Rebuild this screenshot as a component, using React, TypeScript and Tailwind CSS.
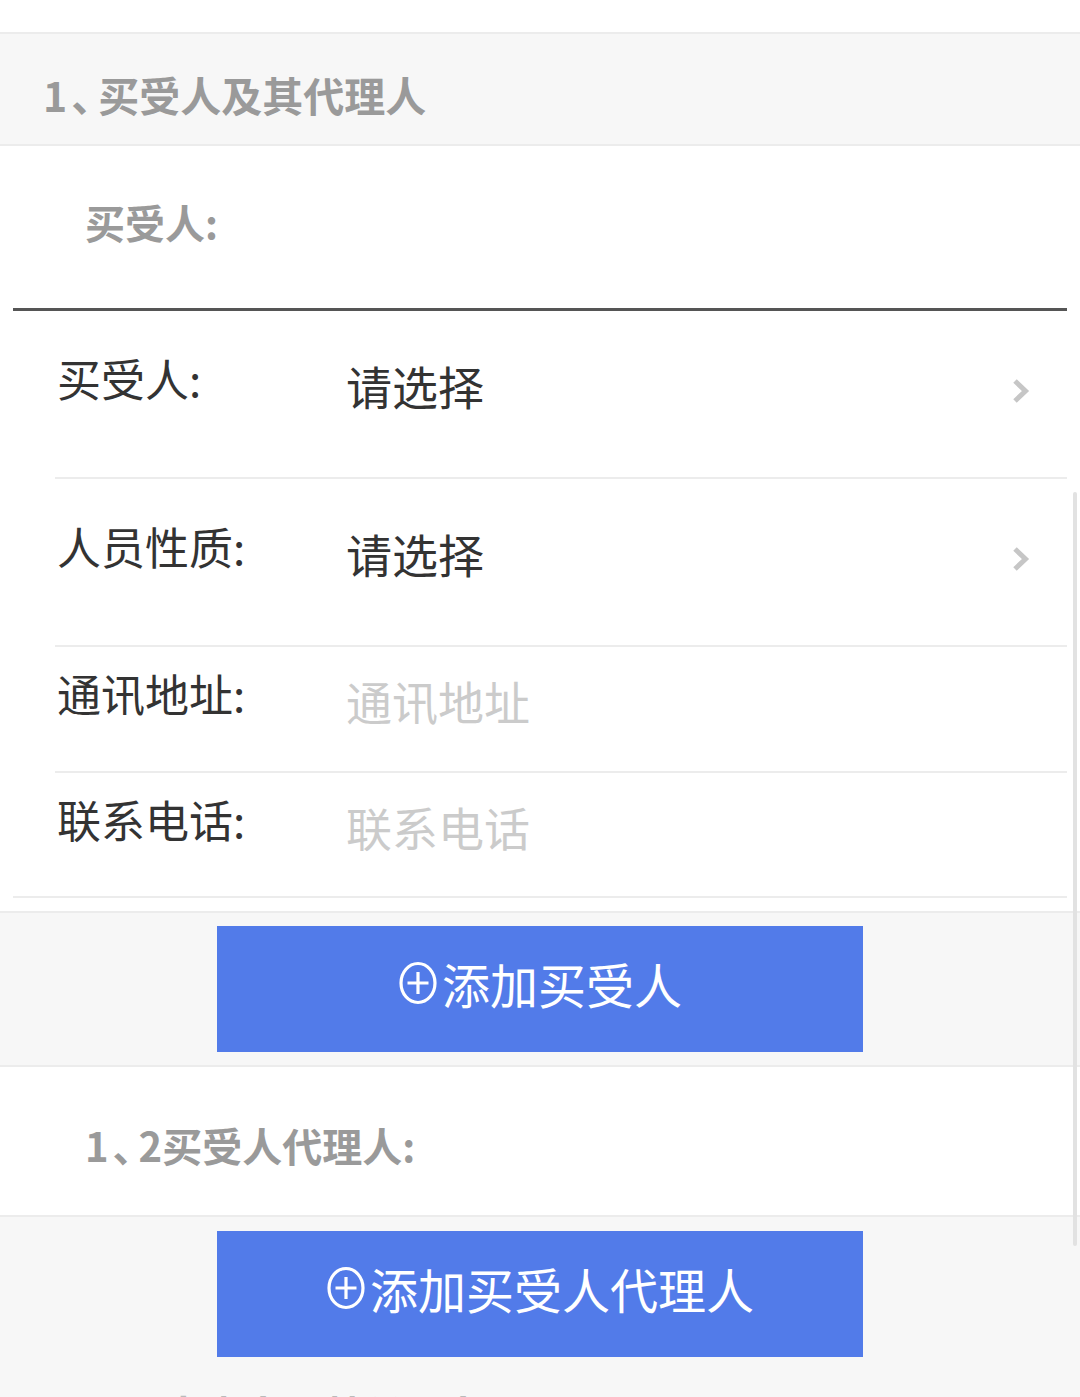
import React from 'react';

const font = { fontFamily: '"Noto Sans CJK SC", "Noto Sans", sans-serif' };

function Chevron() {
  return (
    <svg width="20" height="26" viewBox="0 0 20 26" className="shrink-0 mb-[6px]">
      <path d="M4 3 L14.5 13 L4 23" fill="none" stroke="#c6c6c6" strokeWidth="5" strokeLinecap="butt" />
    </svg>
  );
}

function PlusCircle() {
  return (
    <svg width="40" height="44" viewBox="0 0 40 44" className="shrink-0 mr-[4px]">
      <ellipse cx="20" cy="22" rx="17" ry="19.5" fill="none" stroke="#fff" strokeWidth="3.2" />
      <path d="M20 11 V33 M9.5 22 H30.5" stroke="#fff" strokeWidth="3.2" />
    </svg>
  );
}

type Row = {
  label: string;
  value: string;
  select?: boolean;
  h: string;
  last?: boolean;
};

const rows: Row[] = [
  { label: '买受人:', value: '请选择', select: true, h: 'h-[168px]' },
  { label: '人员性质:', value: '请选择', select: true, h: 'h-[168px]' },
  { label: '通讯地址:', value: '通讯地址', h: 'h-[126px]' },
  { label: '联系电话:', value: '联系电话', h: 'h-[125px]', last: true },
];

function FormRow({ row }: { row: Row }) {
  return (
    <div
      className={`flex items-center border-b-2 border-[#ececec] pr-[36px] ${row.h} ${
        row.last ? 'pl-[44px]' : 'ml-[42px] pl-[2px]'
      }`}
    >
      <div className="w-[289px] shrink-0 mb-[32px] text-[44px] text-[#333] leading-none">{row.label}</div>
      <div
        className={`flex-1 mb-[18px] text-[46px] leading-none ${row.select ? 'text-[#333]' : 'text-[#cbcbcb]'}`}
      >
        {row.value}
      </div>
      {row.select && <Chevron />}
    </div>
  );
}

function AddButton({ text }: { text: string }) {
  return (
    <button className="w-[646px] h-[126px] bg-[#527be9] flex items-center justify-center pb-[12px] text-white text-[48px] leading-none">
      <PlusCircle />
      <span>{text}</span>
    </button>
  );
}

function Dun() {
  // narrow enumeration comma, as in the reference
  return <span className="ml-[4px] tracking-[-14px]">、</span>;
}

export default function App() {
  return (
    <div className="relative w-[1080px] h-[1397px] overflow-hidden bg-white" style={font}>
      <div className="h-[34px] bg-white border-b-2 border-[#ececec]" />

      <div className="h-[112px] bg-[#f7f7f7] border-b-2 border-[#ececec] pl-[43px] pt-[10px] flex items-center">
        <span className="text-[41px] font-bold text-[#9a9a9a] leading-none">
          1<Dun />买受人及其代理人
        </span>
      </div>

      <div className="h-[162px] bg-white pl-[85px] pb-[10px] flex items-center">
        <span className="text-[40px] font-bold text-[#9a9a9a] leading-none">买受人:</span>
      </div>

      <div className="mx-[13px] border-t-[3px] border-[#555] pb-[13px]">
        {rows.map((r, i) => (
          <FormRow key={i} row={r} />
        ))}
      </div>

      <div className="h-[156px] bg-[#f7f7f7] border-y-2 border-[#ececec] flex items-center justify-center">
        <AddButton text="添加买受人" />
      </div>

      <div className="h-[148px] bg-white pl-[85px] pt-[8px] flex items-center">
        <span className="text-[40px] font-bold text-[#9a9a9a] leading-none">
          1<Dun />2买受人代理人:
        </span>
      </div>

      <div className="bg-[#f7f7f7] border-t-2 border-[#ececec] pt-[14px] flex flex-col items-center">
        <AddButton text="添加买受人代理人" />
        <div className="self-start pl-[110px] pt-[36px] text-[40px] font-bold text-[#bbb] leading-none">
          2<Dun />出卖人及其代理人
        </div>
      </div>

      {/* scrollbar */}
      <div className="absolute right-[3px] top-[492px] w-[4px] h-[754px] rounded-full bg-[#e2e2e2]" />
    </div>
  );
}
